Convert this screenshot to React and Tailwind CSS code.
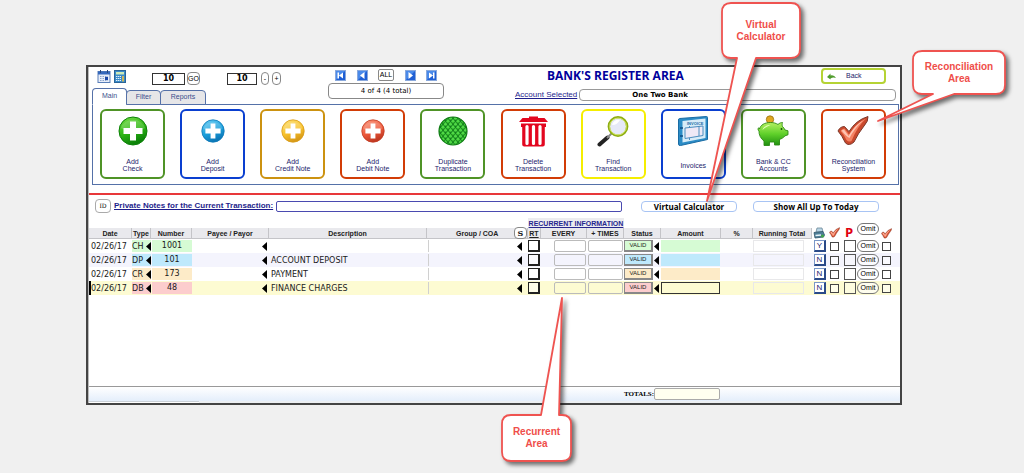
import React, { useState } from "react";

const CARDS = [
  { lines: ["Add", "Check"], border: "border-[#4f9326]", icon: <PlusBall color="green" size={30} /> },
  { lines: ["Add", "Deposit"], border: "border-[#0a3fd0]", icon: <PlusBall color="blue" size={24} /> },
  { lines: ["Add", "Credit Note"], border: "border-[#cc9210]", icon: <PlusBall color="gold" size={24} /> },
  { lines: ["Add", "Debit Note"], border: "border-[#d23c06]", icon: <PlusBall color="red" size={24} /> },
  { lines: ["Duplicate", "Transaction"], border: "border-[#4f9326]", icon: <ScaleBall /> },
  { lines: ["Delete", "Transaction"], border: "border-[#d23c06]", icon: <TrashIcon /> },
  { lines: ["Find", "Transaction"], border: "border-[#f5ee00]", icon: <LensIcon /> },
  { lines: ["Invoices"], border: "border-[#0a3fd0]", icon: <InvoiceIcon /> },
  { lines: ["Bank & CC", "Accounts"], border: "border-[#4f9326]", icon: <PigIcon /> },
  { lines: ["Reconciliation", "System"], border: "border-[#d23c06]", icon: <CheckIcon size={32} /> },
];

const ROWS = [
  { date: "02/26/17", type: "CH", number: "1001", description: "", print: "Y", row: "bg-white", tint: "bg-[#d6fbd4]" },
  { date: "02/26/17", type: "DP", number: "101", description: "ACCOUNT DEPOSIT", print: "N", row: "bg-[#f4f4fd]", tint: "bg-[#bfe9fc]" },
  { date: "02/26/17", type: "CR", number: "173", description: "PAYMENT", print: "N", row: "bg-white", tint: "bg-[#fdebc8]" },
  { date: "02/26/17", type: "DB", number: "48", description: "FINANCE CHARGES", print: "N", row: "bg-[#fdfbd2]", tint: "bg-[#fccdcd]", current: true },
];

const COLUMNS = [
  "w-[43px]", "w-[19px]", "w-[41px]", "w-[77px]", "", "w-[101px]",
  "w-[13px]", "w-[46px]", "w-[37px]", "w-[37px]", "w-[60px]", "w-[32px]",
  "w-[59px]", "w-[15px]", "w-[15px]", "w-[15px]", "w-[23px]", "w-[20px]",
];

const BALLS = {
  green: ["#7be04a", "#2cb414", "#0c8208"],
  blue: ["#6fd0f5", "#1ba0dc", "#0d78b8"],
  gold: ["#fde27a", "#f8c22c", "#d89a18"],
  red: ["#fb9a80", "#ee5a3c", "#c23a22"],
};

function PlusBall({ color, size }) {
  const [light, mid, dark] = BALLS[color];
  const id = "ball-" + color;
  return (
    <svg width={size} height={size} viewBox="0 0 30 30">
      <defs>
        <linearGradient id={id} x1="0" y1="0" x2="0.4" y2="1">
          <stop offset="0" stopColor={light} />
          <stop offset="0.6" stopColor={mid} />
          <stop offset="1" stopColor={dark} />
        </linearGradient>
      </defs>
      <circle cx="15" cy="15" r="14" fill={`url(#${id})`} stroke={dark} strokeWidth="1" />
      <path d="M3 12a12.4 11 0 0 1 24 0c-5 4-18 5-24 0z" fill="#fff" opacity="0.16" />
      <path d="M12 5.500h6v6.500h6.500v6H18v6.500h-6V18H5.500v-6H12z" fill="#fff" />
    </svg>
  );
}

function ScaleBall() {
  return (
    <svg width="30" height="30" viewBox="0 0 30 30">
      <defs>
        <pattern id="scales" width="5" height="6" patternUnits="userSpaceOnUse">
          <rect width="5" height="6" fill="#12801a" />
          <path d="M2.500 0Q4.600 1.800 4.200 3Q2.500 4.600 0.800 3Q0.400 1.800 2.500 0z" fill="#4fd845" />
          <path d="M0 3Q2.100 4.800 1.700 6H-1.700zM5 3Q2.900 4.800 3.300 6H6z" fill="#4fd845" />
          <path d="M0 0H1.700Q1 1.300 0 1.400zM5 0H3.300Q4 1.300 5 1.400z" fill="#36b82e" />
        </pattern>
      </defs>
      <circle cx="15" cy="15" r="14" fill="url(#scales)" stroke="#0d7a12" strokeWidth="1.2" />
    </svg>
  );
}

function TrashIcon() {
  return (
    <svg width="31" height="32" viewBox="0 0 31 32">
      <path d="M11 1.500h9v1.400h6.500L30 7H1l3.500-4.100H11z" fill="#e3061f" />
      <path d="M3 8.500h25V12h-1.200v17.500a2 2 0 0 1-2 2H6.200a2 2 0 0 1-2-2V12H3z" fill="#e3061f" />
      <path d="M9 11.500v17M15.500 11.500v17M22 11.500v17" stroke="#fff" strokeWidth="3.200" strokeLinecap="round" />
    </svg>
  );
}

function LensIcon() {
  return (
    <svg width="32" height="32" viewBox="0 0 32 32">
      <path d="M2.500 29.500L10.500 22.500" stroke="#222" strokeWidth="4" strokeLinecap="round" />
      <path d="M10 23L14.500 18.500" stroke="#8a8a8a" strokeWidth="2" />
      <circle cx="21" cy="11.500" r="9.200" fill="#e6e9f8" stroke="#8fae12" strokeWidth="2.400" />
      <circle cx="21" cy="11.500" r="8.400" fill="none" stroke="#d8ea70" strokeWidth="0.900" />
      <path d="M15 10a6.500 6.500 0 0 1 8-5c-2 3-4 5-8 5z" fill="#fff" />
    </svg>
  );
}

function InvoiceIcon() {
  return (
    <svg width="32" height="32" viewBox="0 0 32 32">
      <path d="M2.500 3.500L29.500 1.500Q30.500 1.500 30.500 2.500V24.500L3.500 30.500Q1.500 30.800 1.500 29V5Q1.500 3.600 2.500 3.500z" fill="#2b8cc6" stroke="#1a6ca4" />
      <path d="M5.500 6L28.500 3.500V23L5.500 27.500z" fill="#d7ecf8" />
      <text x="10" y="9.500" fontSize="4" fontWeight="700" fill="#1a6ca4" fontFamily="Liberation Sans, sans-serif">INVOICE</text>
      <path d="M8 13L26 11V20.500L8 23.500zM22 11.500V21M12.500 12.500V11M12.500 23V25" fill="#eee9f6" stroke="#4d8fc0" />
      <path d="M3 13h3M3 21h3" stroke="#0f4c84" strokeWidth="1.500" />
    </svg>
  );
}

function PigIcon() {
  return (
    <svg width="32" height="32" viewBox="0 0 32 32">
      <defs>
        <linearGradient id="pig" x1="0" y1="0" x2="0" y2="1">
          <stop offset="0" stopColor="#b4f062" />
          <stop offset="0.5" stopColor="#5fd02a" />
          <stop offset="1" stopColor="#1f8f10" />
        </linearGradient>
      </defs>
      <circle cx="13" cy="4.500" r="3.700" fill="#e0a820" stroke="#9c7010" strokeWidth="0.800" />
      <path
        d="M1 14c0-1.500 1.500-1.500 1.500 0 1-4 5-6.500 11-6.500 3 0 5.500.700 7.500 2 1.500-1.500 3-2 4.500-2-.5 1.500-.5 3 0 4 1.200 1 2 2.300 2.500 3.500l3 .800v4l-3 1c-1.500 2-3.500 3-5.500 3.600V30h-5v-3h-5v3.500H7V26C3.500 23.500 1.800 19.500 2 16 1.300 15.500 1 15 1 14z"
        fill="url(#pig)"
        stroke="#2c8a14"
        strokeWidth="0.900"
      />
      <circle cx="24.500" cy="14" r="0.900" fill="#145008" />
      <path d="M5.500 15c.5-3 4-5 8-5-2 1-5 2-8 5z" fill="#e6ffb8" />
    </svg>
  );
}

function CheckIcon({ size }) {
  return (
    <svg width={size} height={size} viewBox="0 0 32 32" className="block">
      <path d="M1 16Q3 11.500 7.500 11.500L12 16.500Q19 5 31 1.500Q31.500 6 27 11Q21 18.500 17 27Q12 31.500 8.500 28Q5 20.500 1 16z" fill="#c9482c" stroke="#7c3a2c" />
      <path d="M3.500 16Q5 13.500 7.500 13.500L12 19.500Q19 8 29 3.500Q20 12 14.500 26Q11.500 27.500 9.500 25Q7 19.500 3.500 16z" fill="#f58263" />
      <path d="M4.500 15.500L7 14.500L11.500 21Q18 10 26 5.500Q17 14 12.500 23Q9 21.500 4.500 15.500z" fill="#fdc4b2" />
    </svg>
  );
}

function CalendarIcon() {
  return (
    <svg width="14" height="13" viewBox="0 0 14 13">
      <rect x="1" y="1.500" width="12" height="11" fill="#e8eefa" stroke="#5a7fb8" />
      <path d="M1 1.500h12v3H1z" fill="#3568bc" />
      <path d="M3.500 0v3M10.500 0v3" stroke="#27477c" />
      <path d="M3 6.500h8M3 8.500h5M3 10.500h8" stroke="#8aa4cc" strokeDasharray="1.500 1" />
      <rect x="8" y="7" width="3" height="3" fill="#1c48a8" />
    </svg>
  );
}

function CalculatorIcon() {
  return (
    <svg width="12" height="13" viewBox="0 0 12 13">
      <rect x="0.500" y="0.500" width="11" height="12" fill="#3a8ac8" stroke="#2a6498" />
      <rect x="2" y="2" width="8" height="2.500" fill="#cdeab8" />
      <path d="M2 6.500h5M2 8.500h5M2 10.500h5" stroke="#e2f2fb" strokeWidth="1.200" strokeDasharray="1.400 0.600" />
      <path d="M9 6v5.500" stroke="#f0c040" strokeWidth="1.600" />
    </svg>
  );
}

function PrinterIcon() {
  return (
    <svg width="12" height="12" viewBox="0 0 12 12" className="block">
      <path d="M3 5L4 1h5l1 4z" fill="#b8d4e4" stroke="#6c8898" strokeWidth="0.800" />
      <path d="M1 5.500L10 4.500L11.500 8L10.500 10L2 11z" fill="#4f7f98" stroke="#2f5468" strokeWidth="0.800" />
      <path d="M2.500 8.500L8 8" stroke="#e6f4f8" strokeWidth="1.400" />
      <circle cx="9.500" cy="9" r="1.500" fill="#3fa848" />
    </svg>
  );
}

function NavButton({ label, d }) {
  return (
    <button type="button" aria-label={label} className="size-[11px]">
      <svg width="11" height="11" viewBox="0 0 11 11" className="block">
        <rect x="0.500" y="0.500" width="10" height="10" fill="#1f5fd4" stroke="#89a8dc" />
        <path d="M1 10V1h9z" fill="#4a8aea" />
        <path d={d} fill="#fff" />
      </svg>
    </button>
  );
}

function Arrow() {
  return (
    <svg width="5" height="9" viewBox="0 0 5 9" className="block shrink-0">
      <path d="M5 0V9L0 4.500z" fill="#000" />
    </svg>
  );
}

function Head({ children, className = "" }) {
  return (
    <th className={"h-[11px] border-r border-b border-[#c4c4c8] bg-[#e9e9ed] p-0 align-middle " + className}>
      {children}
    </th>
  );
}

function OmitButton() {
  return (
    <button type="button" className="block h-[12px] w-[22px] rounded-md border border-[#777] bg-white/60 text-[7px] leading-[10px] text-black">
      Omit
    </button>
  );
}

function Box({ label, className }) {
  return <input type="checkbox" aria-label={label} className={"mx-auto block appearance-none " + className} />;
}

function Callout({ lines, place, box, path, width, height }) {
  return (
    <div className={"pointer-events-none absolute " + place}>
      <svg
        width={width}
        height={height}
        viewBox={`0 0 ${width} ${height}`}
        className="block overflow-visible drop-shadow-[3px_3px_2px_rgba(0,0,0,0.55)]"
      >
        <path d={path} fill="#fff" stroke="#ef5350" strokeWidth="1.800" strokeLinejoin="round" />
      </svg>
      <div className={"absolute flex flex-col items-center justify-center text-[10px] leading-[12px] font-bold text-[#ef4e4a] " + box}>
        {lines.map((line) => (
          <span key={line}>{line}</span>
        ))}
      </div>
    </div>
  );
}

function Toolbar({ tab, setTab }) {
  return (
    <div className="flex h-[37px] pr-1 pl-[3px]">
      <div className="flex w-[236px] flex-col justify-between">
        <div className="flex items-center pt-px pl-[5px]">
          <CalendarIcon />
          <span className="ml-[3px]">
            <CalculatorIcon />
          </span>
          <input aria-label="Record" defaultValue="10" className="mt-1 ml-[26px] h-[12px] w-[33px] border border-[#333] bg-white text-center font-[DejaVu_Sans,sans-serif] text-[8px] font-bold" />
          <button type="button" className="mt-1 ml-[2px] h-[13px] w-[13px] rounded-sm border border-[#888] text-[7px] leading-[11px]">GO</button>
          <input aria-label="Page size" defaultValue="10" className="mt-1 ml-[27px] h-[12px] w-[30px] border border-[#333] bg-white text-center font-[DejaVu_Sans,sans-serif] text-[8px] font-bold" />
          <button type="button" className="mt-1 ml-1 h-[13px] w-[8px] rounded-sm border border-[#888] text-[7px] leading-[11px]">-</button>
          <button type="button" className="mt-1 ml-[3px] h-[13px] w-[9px] rounded-sm border border-[#888] text-[7px] leading-[11px]">+</button>
        </div>
        <div className="z-10 -mb-px flex items-end">
          {["Main", "Filter", "Reports"].map((name) => (
            <button
              key={name}
              type="button"
              onClick={() => setTab(name)}
              className={
                "rounded-t border border-[#5571a8] text-[7px] text-[#3d4f8c] " +
                (name === "Reports" ? "w-[46px] " : "w-[35px] ") +
                (tab === name ? "h-[17px] border-b-white bg-white" : "-ml-px h-[15px] bg-[#e6e6e8]")
              }
            >
              {name}
            </button>
          ))}
        </div>
      </div>

      <div className="flex w-[116px] flex-col gap-[2px] pt-[2px]">
        <div className="flex items-center justify-between px-[7px]">
          <NavButton label="First" d="M2.500 2.500h1.500v6H2.500zM8 2.500v6L4 5.500z" />
          <NavButton label="Previous" d="M7.500 2v7L3 5.500z" />
          <button type="button" className="h-[12px] w-[16px] rounded-xs border border-[#888] text-[7px] leading-[10px]">ALL</button>
          <NavButton label="Next" d="M3.500 2v7L8 5.500z" />
          <NavButton label="Last" d="M7 2.500h1.500v6H7zM3 2.500v6L7 5.500z" />
        </div>
        <div className="h-[16px] rounded border border-[#888] text-center font-[DejaVu_Sans,sans-serif] text-[7px] leading-[14px]">
          4 of 4 (4 total)
        </div>
      </div>

      <div className="ml-[71px] flex flex-1 flex-col gap-[5px] pt-px">
        <div className="flex items-center justify-between pr-[10px] pl-8">
          <h1 className="font-[Open_Sans,sans-serif] text-[12px] leading-[16px] font-bold text-[#00009c]">BANK'S REGISTER AREA</h1>
          <button type="button" className="flex h-[16px] w-[65px] items-center rounded border-2 border-[#b5d334] bg-white pl-1 text-[7px] text-[#1c1c6c]">
            <svg width="9" height="7" viewBox="0 0 9 7">
              <path d="M0 4L3.500 0.500V2.500Q7 1.500 9 5Q6 4 3.500 5.500V6.500z" fill="#4f9c2c" />
            </svg>
            <span className="ml-[10px]">Back</span>
          </button>
        </div>
        <div className="flex items-center gap-[2px]">
          <a href="#account" className="text-[8px] leading-[12px] text-[#1e1e8c] underline">Account Selected</a>
          <div className="h-[12px] flex-1 rounded border border-[#999] pl-[52px] font-[DejaVu_Sans,sans-serif] text-[7px] leading-[10px] font-bold">
            One Two Bank
          </div>
        </div>
      </div>
    </div>
  );
}

function Register() {
  return (
    <table className="w-full table-fixed border-separate border-spacing-0 text-[7px] leading-[9px]">
      <colgroup>
        {COLUMNS.map((width, i) => (
          <col key={i} className={width} />
        ))}
      </colgroup>
      <thead className="text-[#222]">
        <tr className="h-[10px]">
          <th colSpan={6} className="p-0" />
          <th colSpan={3} className="bg-[#ececf0] p-0 text-center text-[#26268e] underline">
            RECURRENT INFORMATION
          </th>
          <th colSpan={9} className="p-0" />
        </tr>
        <tr className="h-[11px]">
          <Head>Date</Head>
          <Head>Type</Head>
          <Head>Number</Head>
          <Head>Payee / Payor</Head>
          <Head>Description</Head>
          <Head>
            <div className="flex h-[10px] items-center justify-between pl-[29px]">
              Group / COA
              <button type="button" className="h-[12px] w-[13px] shrink-0 rounded-sm border border-[#888] bg-white font-[DejaVu_Serif,serif] text-[8px] leading-[10px] font-bold">S</button>
            </div>
          </Head>
          <Head className="underline">RT</Head>
          <Head>EVERY</Head>
          <Head>+ TIMES</Head>
          <Head>Status</Head>
          <Head>Amount</Head>
          <Head>%</Head>
          <Head>Running Total</Head>
          <th className="relative p-0">
            <span className="absolute bottom-0 left-px"><PrinterIcon /></span>
          </th>
          <th className="relative p-0">
            <span className="absolute bottom-px left-[2px]"><CheckIcon size={11} /></span>
          </th>
          <th className="relative p-0">
            <span className="absolute bottom-0 left-[3px] font-[Open_Sans,sans-serif] text-[13px] leading-[14px] text-[#e00010]">P</span>
          </th>
          <th className="relative p-0 font-normal">
            <span className="absolute bottom-1 left-0"><OmitButton /></span>
          </th>
          <th className="relative p-0">
            <span className="absolute bottom-0 left-px"><CheckIcon size={11} /></span>
          </th>
        </tr>
      </thead>
      <tbody className="font-[DejaVu_Sans,sans-serif] text-[8px] text-[#1a1a1a]">
        {ROWS.map((r) => (
          <tr key={r.type} className={"h-[14px] *:p-0 " + r.row}>
            <td className={r.current ? "border-l-2 border-black" : "border-l-2 border-transparent"}>
              {r.date}
            </td>
            <td>
              <div className={"flex h-[12px] items-center justify-between overflow-hidden " + r.tint}>
                {r.type}
                <Arrow />
              </div>
            </td>
            <td className="text-center">
              <div className={"ml-px h-[12px] leading-[12px] " + r.tint}>{r.number}</div>
            </td>
            <td>
              <div className="flex justify-end pr-[2px]"><Arrow /></div>
            </td>
            <td>
              <div className="pl-[2px]">{r.description}</div>
            </td>
            <td>
              <div className="ml-px flex h-[12px] items-center justify-end border-l border-[#d0d0d0] pr-[6px]"><Arrow /></div>
            </td>
            <td>
              <Box label="RT" className="size-[12px] border border-r-2 border-b-2 border-[#222] bg-white/50" />
            </td>
            <td>
              <input aria-label="Every" className="ml-[13px] block h-[12px] w-[32px] rounded-xs border border-[#bbb] bg-transparent" />
            </td>
            <td>
              <input aria-label="Times" className="ml-px block h-[12px] w-[35px] rounded-xs border border-[#bbb] bg-transparent" />
            </td>
            <td>
              <div className="flex items-center gap-px">
                <button type="button" className={"h-[12px] w-[29px] border border-r-2 border-b-2 border-[#888] font-[Liberation_Sans,sans-serif] text-[6px] leading-[9px] " + r.tint}>
                  VALID
                </button>
                <Arrow />
              </div>
            </td>
            <td>
              <input
                aria-label="Amount"
                className={"block h-[12px] w-[59px] border " + (r.current ? "border-[#333] bg-transparent" : "border-transparent " + r.tint)}
              />
            </td>
            <td />
            <td>
              <div className="mr-2 h-[12px] border border-[#e8e8ea]" />
            </td>
            <td>
              <button type="button" className="ml-[2px] block size-[12px] border border-r-2 border-b-2 border-[#7a98c8] border-r-[#2a4a88] border-b-[#2a4a88] bg-white font-[Liberation_Sans,sans-serif] text-[8px] leading-[9px] text-[#1c1c6c]">
                {r.print}
              </button>
            </td>
            <td>
              <Box label="Cleared" className="size-[9px] border border-[#444] bg-white/50" />
            </td>
            <td>
              <Box label="Posted" className="size-[12px] border border-[#555] bg-white/30" />
            </td>
            <td className="font-[Liberation_Sans,sans-serif]">
              <OmitButton />
            </td>
            <td>
              <div className="flex pl-[2px]">
                <input type="checkbox" aria-label="Reconciled" className="size-[9px] appearance-none border border-[#444] bg-white/50" />
              </div>
            </td>
          </tr>
        ))}
      </tbody>
    </table>
  );
}

export default function App() {
  const [tab, setTab] = useState("Main");

  return (
    <div className="relative flex min-h-screen flex-col bg-[#f0f0f0] pt-[65px] pr-[122px] pb-[68px] pl-[86px] font-[Liberation_Sans,Arial,sans-serif]">
      <div className="flex flex-1 flex-col border-2 border-[#444] bg-white">
        <div className="flex flex-1 flex-col border-l border-[#bbb]">
          <Toolbar tab={tab} setTab={setTab} />

          {/* Action cards */}
          <div className="mr-px ml-[3px] flex justify-between border border-[#5571a8] pt-1 pr-[12px] pb-[5px] pl-[7px]">
            {CARDS.map((card) => (
              <button
                key={card.lines.join(" ")}
                type="button"
                className={"flex h-[70px] w-[65px] flex-col items-center rounded-md border-2 bg-white pt-1 text-[7px] leading-[7px] text-[#1c1c6c] " + card.border}
              >
                <span className="flex h-[32px] items-center">{card.icon}</span>
                <span className="flex flex-1 flex-col items-center justify-center pt-[6px]">
                  {card.lines.map((line) => (
                    <span key={line}>{line}</span>
                  ))}
                </span>
              </button>
            ))}
          </div>

          <div className="mt-2 h-[2px] bg-[#e8383a]" />

          {/* Private notes */}
          <div className="mt-1 flex items-center pr-[21px] pl-[6px]">
            <button type="button" className="h-[14px] w-[16px] rounded border border-[#aaa] font-[DejaVu_Serif,serif] text-[6px] leading-[12px]">ID</button>
            <label htmlFor="notes" className="ml-[3px] text-[8px] font-bold text-[#1e1e8c] underline">
              Private Notes for the Current Transaction:
            </label>
            <input id="notes" className="ml-[3px] h-[11px] min-w-0 flex-1 rounded-xs border border-[#4a4ab0]" />
            <button type="button" className="ml-[19px] h-[11px] w-[96px] rounded border border-[#a8c4f4] font-[Open_Sans,sans-serif] text-[8px] leading-[9px] font-bold">
              Virtual Calculator
            </button>
            <button type="button" className="ml-4 h-[11px] w-[126px] rounded border border-[#a8c4f4] font-[Open_Sans,sans-serif] text-[8px] leading-[9px] font-bold">
              Show All Up To Today
            </button>
          </div>

          <div className="mt-[5px] flex-1">
            <Register />
          </div>

          {/* Totals */}
          <div className="flex items-center border-t border-[#999] bg-linear-to-b from-white to-[#e4eefb] py-px pl-[535px]">
            <label htmlFor="totals" className="font-[Liberation_Serif,serif] text-[7px] font-bold">TOTALS:</label>
            <input id="totals" className="h-[12px] w-[66px] rounded-xs border border-[#aaa] bg-[#fffff0]" />
          </div>
          <div className="flex h-[2px] bg-[#eceff2]">
            <div className="w-[110px] border-t border-[#ccd2d8] bg-white" />
          </div>
        </div>
      </div>

      <Callout
        lines={["Virtual", "Calculator"]}
        place="top-[3px] right-[224px]"
        box="top-0 right-0 h-[55px] w-[78px]"
        width={93}
        height={198}
        path="M24 0H84Q93 0 93 9V46Q93 55 84 55H49L0 198L30 55H24Q15 55 15 46V9Q15 0 24 0z"
      />
      <Callout
        lines={["Reconciliation", "Area"]}
        place="top-[51px] right-[19px]"
        box="top-0 right-0 h-[43px] w-[92px]"
        width={127}
        height={70}
        path="M44 0H118Q127 0 127 9V34Q127 43 118 43H76L0 70L55 43H44Q35 43 35 34V9Q35 0 44 0z"
      />
      <Callout
        lines={["Recurrent", "Area"]}
        place="bottom-[12px] left-[502px]"
        box="bottom-0 left-0 h-[46px] w-[69px]"
        width={69}
        height={163}
        path="M9 117H39L60 0L57 117H60Q69 117 69 126V154Q69 163 60 163H9Q0 163 0 154V126Q0 117 9 117z"
      />
    </div>
  );
}
